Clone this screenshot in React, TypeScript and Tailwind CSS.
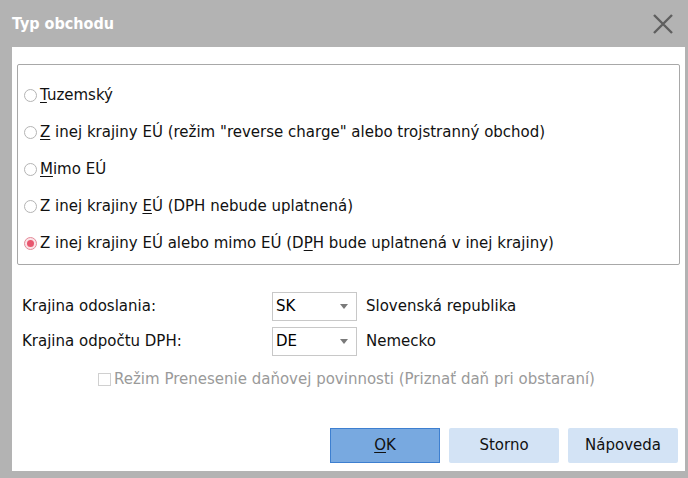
import { useState } from 'react';

const font = { fontFamily: '"DejaVu Sans", Verdana, sans-serif' };

type Opt = { pre: string; key: string; post: string };

const options: Opt[] = [
  { pre: '', key: 'T', post: 'uzemský' },
  { pre: '', key: 'Z', post: ' inej krajiny EÚ (režim "reverse charge" alebo trojstranný obchod)' },
  { pre: '', key: 'M', post: 'imo EÚ' },
  { pre: 'Z inej krajiny ', key: 'E', post: 'Ú (DPH nebude uplatnená)' },
  { pre: 'Z inej krajiny EÚ alebo mimo EÚ (D', key: 'P', post: 'H bude uplatnená v inej krajiny)' },
];

function Radio({ checked }: { checked: boolean }) {
  return checked ? (
    <span className="w-[13px] h-[13px] rounded-full border border-[#e58a99] bg-[#fbe3e7] flex items-center justify-center shrink-0">
      <span className="w-[7px] h-[7px] rounded-full bg-[#e8566e]" />
    </span>
  ) : (
    <span className="w-[13px] h-[13px] rounded-full border border-[#b4b4b4] bg-white shrink-0" />
  );
}

function Combo({ value }: { value: string }) {
  return (
    <div className="w-[85px] h-[29px] border border-[#c8c8c8] bg-white flex items-center justify-between pl-[3px] pr-[8px]">
      <span className="text-[15px] text-black">{value}</span>
      <svg width="8" height="5" viewBox="0 0 8 5"><path d="M0 0h8L4 5z" fill="#7a7a7a" /></svg>
    </div>
  );
}

export default function App() {
  const [sel, setSel] = useState(4);
  return (
    <div className="w-[688px] h-[478px] bg-[#b3b3b3] flex flex-col" style={font}>
      <div className="h-[47px] flex items-center justify-between pl-[12px] pr-[14px]">
        <span
          className="text-white text-[16px] font-bold"
          style={{ fontFamily: '"Liberation Sans Narrow", "DejaVu Sans Condensed", sans-serif' }}
        >
          Typ obchodu
        </span>
        <svg width="22" height="22" viewBox="0 0 22 22">
          <path d="M2 2L20 20M20 2L2 20" stroke="#5f5f5f" strokeWidth="2.4" />
        </svg>
      </div>
      <div className="ml-[12px] mr-[3px] h-[424px] bg-white pt-[17px] px-[5px] flex flex-col">
        <div className="h-[201px] border border-[#a8a8a8] rounded-[2px] pt-[12px] pl-[6px]">
          {options.map((o, i) => (
            <div key={i} className="h-[37px] flex items-center gap-[3px] cursor-default" onClick={() => setSel(i)}>
              <Radio checked={sel === i} />
              <span className="text-[15px] text-[#111]">
                {o.pre}
                <span className="underline underline-offset-2">{o.key}</span>
                {o.post}
              </span>
            </div>
          ))}
        </div>
        <div className="mt-[26px] flex items-center h-[30px] pl-[5px]">
          <span className="w-[250px] text-[15px] text-[#111]">Krajina odoslania:</span>
          <Combo value="SK" />
          <span className="ml-[9px] text-[15px] text-[#111]">Slovenská republika</span>
        </div>
        <div className="mt-[5px] flex items-center h-[30px] pl-[5px]">
          <span className="w-[250px] text-[15px] text-[#111]">Krajina odpočtu DPH:</span>
          <Combo value="DE" />
          <span className="ml-[9px] text-[15px] text-[#111]">Nemecko</span>
        </div>
        <div className="mt-[13px] flex items-center h-[20px] pl-[81px] gap-[3px]">
          <span className="w-[13px] h-[13px] border border-[#d0d0d0] bg-white" />
          <span className="text-[15px] text-[#9a9a9a]">Režim Prenesenie daňovej povinnosti (Priznať daň pri obstaraní)</span>
        </div>
        <div className="mt-auto mb-[8px] flex justify-end gap-[9px] pr-[2px]">
          <button className="w-[110px] h-[35px] bg-[#78a9e0] border border-[#3d7fd0] text-[15px] text-[#111]">
            <span className="underline underline-offset-2">O</span>K
          </button>
          <button className="w-[110px] h-[35px] bg-[#d3e3f5] rounded-[2px] text-[15px] text-[#111]">Storno</button>
          <button className="w-[110px] h-[35px] bg-[#d3e3f5] rounded-[2px] text-[15px] text-[#111]">Nápoveda</button>
        </div>
      </div>
      <div className="flex-1" />
    </div>
  );
}
